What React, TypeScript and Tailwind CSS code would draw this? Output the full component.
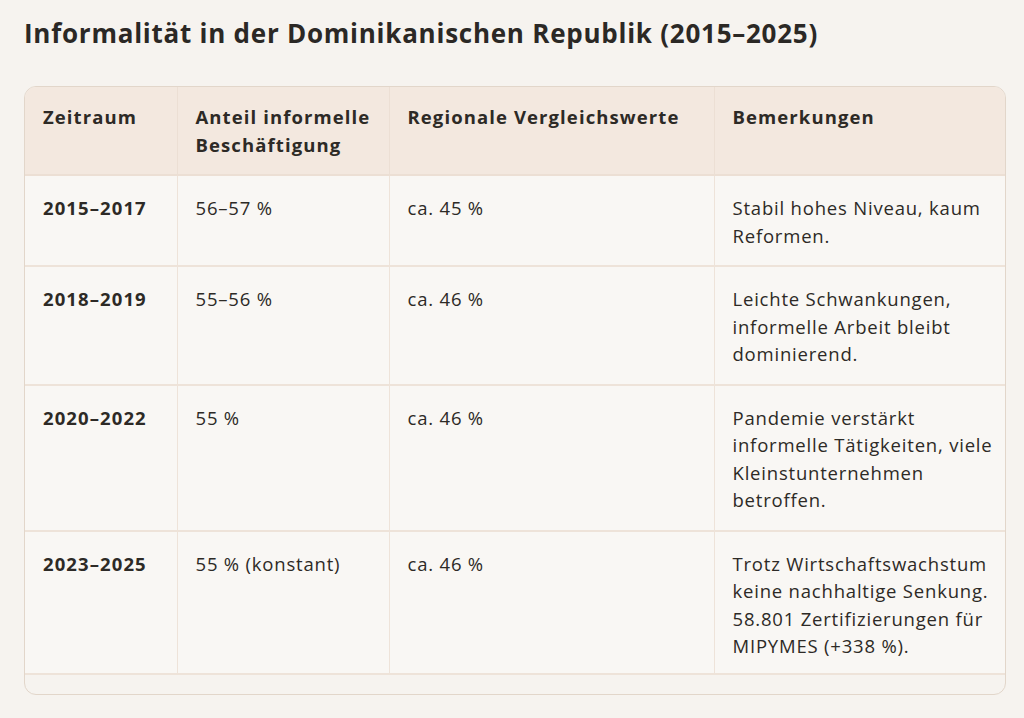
const rows = [
  {
    period: "2015–2017",
    share: "56–57 %",
    regional: "ca. 45 %",
    note: "Stabil hohes Niveau, kaum Reformen.",
  },
  {
    period: "2018–2019",
    share: "55–56 %",
    regional: "ca. 46 %",
    note: "Leichte Schwankungen, informelle Arbeit bleibt dominierend.",
  },
  {
    period: "2020–2022",
    share: "55 %",
    regional: "ca. 46 %",
    note: "Pandemie verstärkt informelle Tätigkeiten, viele Kleinstunternehmen betroffen.",
  },
  {
    period: "2023–2025",
    share: "55 % (konstant)",
    regional: "ca. 46 %",
    note: "Trotz Wirtschaftswachstum keine nachhaltige Senkung. 58.801 Zertifizierungen für MIPYMES (+338 %).",
  },
];

export default function App() {
  return (
    <div
      className="min-h-[718px] bg-[#f6f3ef] px-6 pt-[14px] text-[#2d2a26]"
      style={{ fontFamily: "'Open Sans', sans-serif" }}
    >
      <h1 className="text-[26px] font-bold leading-[38px] tracking-[0.75px] text-[#2b2825]">
        Informalität in der Dominikanischen Republik (2015–2025)
      </h1>

      <div className="mt-[34px] w-[982px] overflow-hidden rounded-xl border border-[#e2d6ca] bg-[#f6f3ef] pb-[19px]">
        <table className="w-full table-fixed border-collapse text-[18.5px] leading-[27.5px] tracking-[0.8px]">
          <colgroup>
            <col className="w-[152px]" />
            <col className="w-[212px]" />
            <col className="w-[325px]" />
            <col />
          </colgroup>
          <thead>
            <tr className="bg-[#f3e8df] tracking-[1.1px]">
              <th className="border-b-2 border-r border-[#ecdfd4] px-[18px] py-[16px] text-left align-top font-bold">
                Zeitraum
              </th>
              <th className="border-b-2 border-r border-[#ecdfd4] px-[18px] py-[16px] text-left align-top font-bold">
                Anteil informelle Beschäftigung
              </th>
              <th className="border-b-2 border-r border-[#ecdfd4] px-[18px] py-[16px] text-left align-top font-bold">
                Regionale Vergleichswerte
              </th>
              <th className="border-b-2 border-[#ecdfd4] pl-[18px] pr-[6px] py-[16px] text-left align-top font-bold">
                Bemerkungen
              </th>
            </tr>
          </thead>
          <tbody className="bg-[#f9f7f4]">
            {rows.map((r, i) => {
              const pb = i === rows.length - 1 ? "pb-[13px]" : "pb-[16px]";
              return (
                <tr key={r.period}>
                  <td className={`border-b-2 border-r border-[#eee3d9] px-[18px] pt-[18px] ${pb} align-top font-bold tracking-[1.1px]`}>
                    {r.period}
                  </td>
                  <td className={`border-b-2 border-r border-[#eee3d9] px-[18px] pt-[18px] ${pb} align-top`}>
                    {r.share}
                  </td>
                  <td className={`border-b-2 border-r border-[#eee3d9] px-[18px] pt-[18px] ${pb} align-top`}>
                    {r.regional}
                  </td>
                  <td className={`border-b-2 border-[#eee3d9] pl-[18px] pr-[6px] pt-[18px] ${pb} align-top`}>
                    {r.note}
                  </td>
                </tr>
              );
            })}
          </tbody>
        </table>
      </div>
    </div>
  );
}
